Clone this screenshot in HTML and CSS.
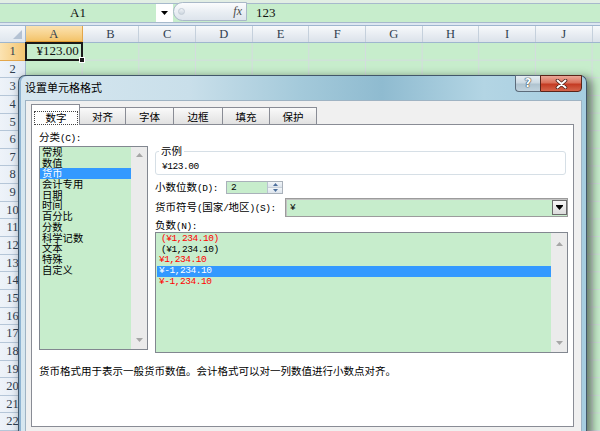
FILE: index.html
```html
<!DOCTYPE html>
<html lang="zh-CN">
<head>
<meta charset="utf-8">
<title>设置单元格格式</title>
<link rel="stylesheet" href="styles.css">
</head>
<body>
<div class="excel">
  <div class="fbar">
    <div class="namebox">A1</div>
    <div class="nbdrop"><svg width="7" height="4" viewBox="0 0 7 4"><path d="M0 0H7L3.5 4Z" fill="#000"/></svg></div>
    <div class="fxpill"><span class="grip"></span><span class="fx">fx</span></div>
    <div class="formula">123</div>
  </div>
  <div class="fsep"></div>
  <div class="sheet">
    <div class="corner"><svg width="25" height="16" viewBox="0 0 25 16"><path d="M22 4V13H13Z" fill="#b4c2d3"/></svg></div>
    <div class="colheads">
      <div class="ch sel">A</div><div class="ch">B</div><div class="ch">C</div><div class="ch">D</div><div class="ch">E</div><div class="ch">F</div><div class="ch">G</div><div class="ch">H</div><div class="ch">I</div><div class="ch">J</div><div class="ch"></div>
    </div>
    <div class="rowheads">
      <div class="rh sel">1</div><div class="rh">2</div><div class="rh">3</div><div class="rh">4</div><div class="rh">5</div><div class="rh">6</div><div class="rh">7</div><div class="rh">8</div><div class="rh">9</div><div class="rh">10</div><div class="rh">11</div><div class="rh">12</div><div class="rh">13</div><div class="rh">14</div><div class="rh">15</div><div class="rh">16</div><div class="rh">17</div><div class="rh">18</div><div class="rh">19</div><div class="rh">20</div><div class="rh">21</div><div class="rh">22</div>
    </div>
    <div class="cells">
      <div class="a1">¥123.00<span class="handle"></span></div>
    </div>
  </div>
</div>

<div class="dialog">
  <div class="titlebar">
    <span class="title">设置单元格格式</span>
    <div class="tbtns">
      <div class="btn-help">?</div>
      <div class="btn-close"><svg width="13" height="10" viewBox="0 0 13 10"><path d="M2.5 1.5L10.5 8.5M10.5 1.5L2.5 8.5" stroke="#4a2018" stroke-width="3.6" stroke-linecap="round"/><path d="M2.5 1.5L10.5 8.5M10.5 1.5L2.5 8.5" stroke="#fff" stroke-width="2" stroke-linecap="round"/></svg></div>
    </div>
  </div>
  <div class="client">
    <div class="tabs">
      <div class="tab active w49"><span class="focus">数字</span></div>
      <div class="tab w46">对齐</div>
      <div class="tab w48">字体</div>
      <div class="tab w49">边框</div>
      <div class="tab w47">填充</div>
      <div class="tab w47">保护</div>
    </div>
    <div class="panel">
      <div class="cols">
        <div class="leftcol">
          <div class="lbl">分类<span class="mono">(C):</span></div>
          <div class="listbox cat">
            <div class="items">
              <div class="item">常规</div>
              <div class="item">数值</div>
              <div class="item selected">货币</div>
              <div class="item">会计专用</div>
              <div class="item">日期</div>
              <div class="item">时间</div>
              <div class="item">百分比</div>
              <div class="item">分数</div>
              <div class="item">科学记数</div>
              <div class="item">文本</div>
              <div class="item">特殊</div>
              <div class="item">自定义</div>
            </div>
            <div class="vscroll cat-scroll">
              <svg width="7" height="4" viewBox="0 0 7 4"><path d="M0 4H7L3.5 0Z" fill="#a6a6a6"/></svg>
              <svg width="7" height="4" viewBox="0 0 7 4"><path d="M0 0H7L3.5 4Z" fill="#a6a6a6"/></svg>
            </div>
          </div>
        </div>
        <div class="rightcol">
          <div class="sample">
            <span class="legend">示例</span>
            <div class="mono">¥123.00</div>
          </div>
          <div class="row spinrow">
            <span class="rlabel w71">小数位数<span class="mono">(D):</span></span>
            <div class="spin">
              <span class="val mono">2</span>
              <div class="spinbtns">
                <span class="sb"><svg width="5" height="3" viewBox="0 0 5 3"><path d="M0 3H5L2.5 0Z" fill="#4d6f9c"/></svg></span>
                <span class="sb"><svg width="5" height="3" viewBox="0 0 5 3"><path d="M0 0H5L2.5 3Z" fill="#4d6f9c"/></svg></span>
              </div>
            </div>
          </div>
          <div class="row selrow">
            <span class="rlabel w130">货币符号<span class="mono">(</span>国家<span class="mono">/</span>地区<span class="mono">)(S):</span></span>
            <div class="select">
              <span class="sval mono">¥</span>
              <span class="sbtn"><svg width="7" height="5" viewBox="0 0 7 5"><path d="M0 0H7V1H0ZM0 1H7L3.5 5Z" fill="#000"/></svg></span>
            </div>
          </div>
          <div class="lbl neglbl">负数<span class="mono">(N):</span></div>
          <div class="listbox neg">
            <div class="items">
              <div class="item mono red paren">(¥1,234.10)</div>
              <div class="item mono paren">(¥1,234.10)</div>
              <div class="item mono red">¥1,234.10</div>
              <div class="item mono selected">¥-1,234.10</div>
              <div class="item mono red">¥-1,234.10</div>
            </div>
            <div class="vscroll neg-scroll">
              <svg width="7" height="4" viewBox="0 0 7 4"><path d="M0 4H7L3.5 0Z" fill="#a6a6a6"/></svg>
              <svg width="7" height="4" viewBox="0 0 7 4"><path d="M0 0H7L3.5 4Z" fill="#a6a6a6"/></svg>
            </div>
          </div>
        </div>
      </div>
      <div class="desc">货币格式用于表示一般货币数值。会计格式可以对一列数值进行小数点对齐。</div>
    </div>
  </div>
</div>
</body>
</html>
```

FILE: styles.css
```css
* { box-sizing: border-box; }
html, body { margin: 0; padding: 0; }
body {
  width: 600px;
  height: 431px;
  overflow: hidden;
  position: relative;
  background: #c7edcc;
  font-family: "Liberation Serif", serif;
}

/* formula bar */
.fbar {
  height: 22px;
  display: flex;
  align-items: flex-start;
  background: linear-gradient(to bottom, #e2eee4 0, #e2eee4 3px, #a7b9cc 3px, #a7b9cc 4px, #c7edcc 4px);
}
.namebox {
  width: 156px;
  height: 18px;
  margin-top: 4px;
  display: flex;
  align-items: center;
  justify-content: center;
  font-size: 13px;
  color: #111;
}
.nbdrop {
  width: 17px;
  height: 18px;
  margin-top: 4px;
  background: #fff;
  display: flex;
  align-items: center;
  justify-content: center;
}
.fxpill {
  width: 74px;
  height: 19px;
  margin-top: 2px;
  border: 1px solid #a9b8c8;
  border-radius: 10px 0 0 10px;
  background: linear-gradient(#fbfcfd, #e9eef3 55%, #dde4ec);
  display: flex;
  align-items: center;
  padding-left: 4px;
}
.grip {
  width: 7px;
  height: 7px;
  border-radius: 50%;
  border: 1px solid #c3ccd6;
  background: linear-gradient(#eef2f6, #cdd6df);
}
.fx {
  margin-left: auto;
  margin-right: 4px;
  font-style: italic;
  font-size: 12px;
  color: #4a4a4a;
}
.formula {
  margin-top: 4px;
  height: 18px;
  padding-left: 9px;
  display: flex;
  align-items: center;
  font-size: 13px;
  color: #111;
}
.fsep {
  height: 4px;
  background: linear-gradient(to bottom, #a7b9cc 0, #a7b9cc 1px, #dde7f1 1px, #dde7f1 3px, #9eb6ce 3px);
}

/* sheet */
.sheet {
  display: grid;
  grid-template-columns: 26px 1fr;
  grid-template-rows: 17px 1fr;
  height: 405px;
}
.corner {
  background: linear-gradient(#f4f7fa, #dfe6ee);
  border-right: 1px solid #9eb6ce;
  border-bottom: 1px solid #9eb6ce;
}
.corner svg { display: block; }
.colheads {
  display: flex;
  overflow: hidden;
  border-bottom: 1px solid #9eb6ce;
  background: linear-gradient(#f7f9fb, #e6ebf1 60%, #dbe2ea);
}
.ch {
  flex: 0 0 56.67px;
  border-right: 1px solid #c5d0dc;
  text-align: center;
  font-size: 12.5px;
  line-height: 16px;
  color: #2f3e50;
}
.ch.sel {
  background: linear-gradient(#fbe3b2, #f7d189 55%, #f2c063);
  border-right-color: #e3a64a;
  box-shadow: inset 0 -1px 0 #e39a32;
}
.rowheads {
  display: flex;
  flex-direction: column;
  overflow: hidden;
}
.rh {
  flex: none;
  height: 17.65px;
  border-right: 1px solid #9eb6ce;
  border-bottom: 1px solid #b5c6d8;
  background: linear-gradient(to right, #eef3f9, #e2eaf4);
  text-align: center;
  font-size: 12.5px;
  line-height: 16.65px;
  color: #2f3e50;
}
.rh.sel {
  background: linear-gradient(to right, #fbe3b2, #f4c672);
  border-bottom-color: #e3a64a;
}
.cells {
  background-color: #c7edcc;
  background-image:
    linear-gradient(to right, #d4dbdf 1px, transparent 1px),
    linear-gradient(to bottom, #d4dbdf 1px, transparent 1px);
  background-size: 56.67px 100%, 100% 17.65px;
  background-position: -1px 0, 0 -1px;
}
.a1 {
  position: relative;
  width: 57.67px;
  height: 18.65px;
  margin: -1px 0 0 -1px;
  border: 2px solid #1a1a1a;
  text-align: right;
  padding-right: 2px;
  font-size: 13px;
  line-height: 14px;
  color: #111;
}
.handle {
  position: absolute;
  right: -4px;
  bottom: -4px;
  width: 6px;
  height: 6px;
  background: #1a1a1a;
  border: 1px solid #fff;
}

/* dialog */
.dialog {
  position: absolute;
  left: 18px;
  top: 75px;
  width: 569px;
  height: 360px;
  border: 1px solid #42576a;
  border-bottom: none;
  border-radius: 7px 7px 0 0;
  background: linear-gradient(to right, #d7e7f0 0%, #c9dfea 30%, #a3c9da 50%, #8fbbd0 64%, #b3d5e4 82%, #a6cde0 100%);
  box-shadow: inset 2px 0 0 #8fb4d2, 4px 3px 10px 1px rgba(0, 0, 0, 0.5);
  display: flex;
  flex-direction: column;
  font-family: "Noto Sans CJK SC", sans-serif;
  font-size: 10.5px;
  color: #000;
}
.titlebar {
  flex: none;
  height: 24px;
  display: flex;
  align-items: flex-start;
  padding-left: 6px;
}
.title {
  padding-top: 4px;
  font-size: 11px;
  line-height: 14px;
  color: #000;
}
.tbtns {
  margin-left: auto;
  margin-top: -1px;
  margin-right: 4px;
  display: flex;
  height: 17px;
}
.btn-help {
  width: 25px;
  height: 17px;
  border: 1px solid #5b6b7a;
  border-right: none;
  border-radius: 0 0 0 4px;
  background: linear-gradient(#e6eef3, #ccdae3 45%, #afc3cf 55%, #c1d3de);
  color: #fff;
  font-family: "DejaVu Sans", sans-serif;
  font-weight: bold;
  font-size: 12px;
  line-height: 15px;
  text-align: center;
  text-shadow: 0 0 1px #2e3a44, 0 0 1px #2e3a44, 0 0 1px #2e3a44;
}
.btn-close {
  width: 42px;
  height: 17px;
  border: 1px solid #5a2419;
  border-radius: 0 0 4px 0;
  background: linear-gradient(#eba898, #d9705a 45%, #c43b23 55%, #d5664c);
  display: flex;
  align-items: center;
  justify-content: center;
}
.btn-close svg { display: block; }
.client {
  flex: 1;
  margin: 0 4px 0 6px;
  background: #f0f0f0;
  border: 1px solid #9fb3c3;
  border-bottom: none;
  padding: 3px 7px 0 5px;
}
.tabs {
  display: flex;
  align-items: flex-end;
  height: 20px;
  position: relative;
  z-index: 1;
}
.tab {
  flex: none;
  height: 17px;
  border-top: 1px solid #898c95;
  border-right: 1px solid #898c95;
  background: linear-gradient(#fafafa, #ededed 50%, #e1e1e1);
  text-align: center;
  line-height: 13px;
  padding-top: 2px;
}
.tab.active {
  height: 21px;
  margin-bottom: -1px;
  border-left: 1px solid #898c95;
  background: #fff;
  padding-top: 0;
}
.focus {
  display: block;
  height: 12px;
  margin: 7px 2px 0 3px;
  outline: 1px dotted #444;
  line-height: 11px;
}
.w46 { width: 46px; }
.w47 { width: 47px; }
.w48 { width: 48px; }
.w49 { width: 49px; }
.panel {
  height: 303px;
  background: #fff;
  border: 1px solid #898c95;
  padding: 5px 5px 0 7px;
}
.cols {
  display: flex;
  align-items: flex-start;
  gap: 7px;
}
.leftcol {
  width: 109px;
  flex: none;
}
.lbl {
  line-height: 14px;
  height: 14px;
  white-space: nowrap;
}
.listbox {
  display: flex;
  border: 1px solid #828790;
  background: #c7edcc;
}
.cat {
  margin-top: 2px;
  height: 204px;
}
.items { flex: 1; min-width: 0; }
.item {
  height: 10.7px;
  line-height: 10.7px;
  padding-left: 2px;
  white-space: nowrap;
}
.cat .item { font-size: 10.3px; }
.item.selected {
  background: #3399ff;
  color: #fff;
}
.vscroll {
  flex: none;
  width: 16px;
  background: #ebebeb;
  display: flex;
  flex-direction: column;
  justify-content: space-between;
  align-items: center;
}
.vscroll svg { display: block; }
.cat-scroll { padding: 6px 0 7px; }
.neg-scroll { padding: 9px 0 7px; }
.rightcol {
  flex: 1;
  min-width: 0;
}
.mono {
  font-family: "Liberation Mono", monospace;
  font-size: 9.5px;
  letter-spacing: -0.45px;
}
.sample {
  position: relative;
  margin-top: 21px;
  margin-right: 2px;
  height: 24px;
  border: 1px solid #d6dfe6;
  border-radius: 3px;
  padding: 8px 0 0 6px;
  line-height: 13px;
}
.legend {
  position: absolute;
  top: -8px;
  left: 3px;
  padding: 0 2px;
  background: #fff;
  line-height: 14px;
}
.row {
  display: flex;
  align-items: center;
}
.spinrow { margin-top: 6px; height: 13px; }
.selrow { margin-top: 4px; height: 19px; }
.rlabel {
  flex: none;
  white-space: nowrap;
  line-height: 13px;
}
.w71 { width: 71px; }
.w130 { width: 130px; }
.spin {
  width: 57px;
  height: 13px;
  display: flex;
  border: 1px solid #a9b1ba;
  background: #c7edcc;
}
.spin .val {
  flex: 1;
  padding-left: 4px;
  line-height: 11px;
}
.spinbtns {
  width: 15px;
  display: flex;
  flex-direction: column;
  border-left: 1px solid #b9c4cf;
}
.sb {
  flex: 1;
  display: flex;
  align-items: center;
  justify-content: center;
  background: linear-gradient(#f3f6f9, #dce4ec);
}
.sb + .sb { border-top: 1px solid #c8d1da; }
.sb svg { display: block; }
.select {
  flex: 1;
  height: 19px;
  display: flex;
  border: 1px solid #9c9c9c;
  box-shadow: inset 1px 1px 0 #c3c3c3;
  background: #c7edcc;
  padding: 1px 0 1px 1px;
}
.sval {
  flex: 1;
  padding-left: 3px;
  line-height: 15px;
}
.sbtn {
  width: 15px;
  height: 15px;
  border: 1px solid #6a6a6a;
  background: linear-gradient(#f6f6f6, #dcdcdc);
  display: flex;
  align-items: center;
  justify-content: center;
}
.sbtn svg { display: block; }
.neglbl {
  margin-top: 1px;
  height: 13px;
  line-height: 13px;
}
.neg {
  margin-top: 1px;
  height: 121px;
}
.neg .items { padding: 1px 0 0 1px; }
.neg .item { padding-left: 2px; }
.neg .item.paren { padding-left: 4px; }
.red { color: #ff0000; }
.desc {
  margin-top: 11px;
  line-height: 14px;
  white-space: nowrap;
}
```
